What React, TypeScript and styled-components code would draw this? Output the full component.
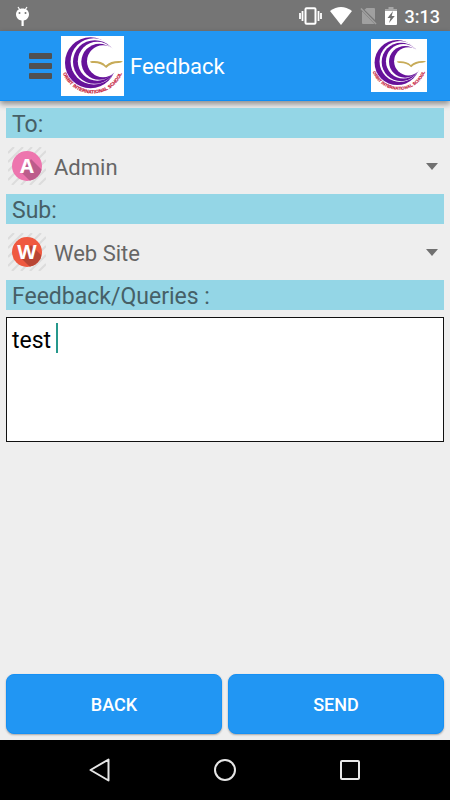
import React, { useId, useState } from "react";
import styled, { createGlobalStyle } from "styled-components";

const GlobalStyle = createGlobalStyle`
  * { box-sizing: border-box; }
  body { margin: 0; background: #eeeeee; font-family: Roboto, "Noto Sans", sans-serif; }
  button, select, textarea { font-family: inherit; }
`;

const Screen = styled.div`
  display: flex;
  flex-direction: column;
  min-height: 100vh;
`;

const StatusBar = styled.div`
  display: flex;
  align-items: center;
  justify-content: space-between;
  height: 31px;
  padding: 0 10px 0 14px;
  background: #757575;
  color: #ffffff;
`;

const StatusGroup = styled.div`
  display: flex;
  align-items: center;
  gap: 8px;
`;

const Clock = styled.time`
  font-size: 18px;
  font-weight: 500;
  line-height: 24px;
  padding-top: 2px;
`;

const AppBar = styled.header`
  display: flex;
  align-items: center;
  height: 70px;
  padding: 0 23px 0 28px;
  background: #2196f3;
  border-bottom: 1px solid #0c8cf5;
  box-shadow: 0 3px 6px rgba(0, 0, 0, 0.42);
`;

const MenuButton = styled.button`
  display: flex;
  padding: 0;
  border: 0;
  background: none;
  margin-right: 8px;
`;

const Title = styled.h1`
  flex: 1;
  margin: 0 0 0 6px;
  font-size: 22px;
  font-weight: 400;
  line-height: 30px;
  color: #ffffff;
  padding-top: 3px;
`;

const Form = styled.form`
  display: flex;
  flex-direction: column;
  flex: 1;
  padding: 7px 6px 6px;
`;

const FieldLabel = styled.label`
  display: block;
  padding: 3px 6px 0;
  background: #94d6e6;
  color: #466067;
  font-size: 23px;
  line-height: 27px;
`;

const PickerRow = styled.div`
  display: flex;
  align-items: center;
  height: 56px;
  padding: 0 6px 0 2px;
`;

const Picker = styled.select`
  flex: 1;
  min-width: 0;
  height: 40px;
  margin-left: 8px;
  padding: 4px 0 0;
  appearance: none;
  border: 0;
  background: none;
  color: #666666;
  font-size: 22px;
  line-height: 30px;
`;

const MessageArea = styled.div`
  position: relative;
  display: flex;
  margin-top: 7px;
`;

const MessageBox = styled.textarea`
  flex: 1;
  height: 125px;
  padding: 8px 5px;
  border: 1px solid #111111;
  border-radius: 0;
  outline: none;
  resize: none;
  background: #ffffff;
  color: #000000;
  caret-color: #26988c;
  font-size: 23px;
  line-height: 30px;
`;

const Caret = styled.span`
  position: absolute;
  top: 6px;
  left: 50px;
  width: 2px;
  height: 30px;
  background: #26988c;
  pointer-events: none;
`;

const Actions = styled.div`
  display: flex;
  gap: 6px;
  margin-top: auto;
`;

const ActionButton = styled.button`
  flex: 1;
  height: 60px;
  padding: 0;
  border: 1px solid #1590f5;
  border-radius: 8px;
  background: #2196f3;
  box-shadow: 0 1px 2px rgba(0, 0, 0, 0.3);
  color: #ffffff;
  font-size: 18px;
  font-weight: 500;
`;

const NavBar = styled.nav`
  display: flex;
  align-items: center;
  justify-content: center;
  gap: 101px;
  height: 60px;
  background: #000000;
`;

const NavButton = styled.button`
  display: flex;
  padding: 0;
  border: 0;
  background: none;
`;

function SchoolLogo({ width, height }: { width: number; height: number }) {
  const id = useId();
  return (
    <svg width={width} height={height} viewBox="0 0 63 60" preserveAspectRatio="none" role="img" aria-label="Orbit International School">
      <rect width="63" height="60" fill="#fff" />
      <circle cx="29.500" cy="26.700" r="25.500" fill="#66129a" />
      <circle cx="32.800" cy="25.400" r="23.200" fill="#fff" />
      <circle cx="33.800" cy="26" r="21.800" fill="#66129a" />
      <circle cx="36.300" cy="25.200" r="19.500" fill="#fff" />
      <circle cx="38.300" cy="25.800" r="18" fill="#66129a" />
      <circle cx="42" cy="25.200" r="16" fill="#fff" />
      <path d="M29 25.500c6-1 12-.2 15.800 4 4-4 10-5 17-4.200-1 1.200-2.200 1.600-4 1.600-5 .1-9.200 1.700-12.600 5-3.600-3.600-8.200-5-13-4.800-1.800 0-2.800-.6-3.200-1.600Z" fill="#c7ab58" />
      <path id={id} d="M2 37A31.500 31.500 0 0 0 61 37" fill="none" />
      <text fontFamily="'Liberation Sans', sans-serif" fontSize="4.700" fontWeight="700" fill="#c4163a" stroke="#c4163a" strokeWidth="0.200">
        <textPath href={`#${id}`} startOffset="50%" textAnchor="middle">ORBIT INTERNATIONAL SCHOOL</textPath>
      </text>
    </svg>
  );
}

function LetterBadge({ letter, color, shade }: { letter: string; color: string; shade: string }) {
  const id = useId();
  return (
    <svg width="38" height="38" viewBox="0 0 38 38" aria-hidden="true">
      <defs>
        <clipPath id={id}><circle cx="19" cy="19" r="15" /></clipPath>
      </defs>
      <path d="M0 6 6 0M0 15 15 0M0 24 24 0M0 33 33 0M4 38 38 4M13 38 38 13M22 38 38 22M31 38 38 31" stroke="#dcdcdc" strokeWidth="2" />
      <circle cx="19" cy="19" r="15" fill={color} />
      <path d="M23 12 40 29 30 42 13 25Z" fill={shade} clipPath={`url(#${id})`} />
      <text x="19" y="26" textAnchor="middle" fontFamily="'Noto Sans', sans-serif" fontSize="20" fontWeight="700" fill="#fff">{letter}</text>
    </svg>
  );
}

function DropArrow() {
  return (
    <svg width="12" height="7" viewBox="0 0 12 7" aria-hidden="true">
      <path d="M0 0h12L6 7Z" fill="#707070" />
    </svg>
  );
}

function DebugIcon() {
  return (
    <svg width="17" height="20" viewBox="0 0 17 20" aria-hidden="true">
      <path d="M4 1 6 4M13 1 11 4" stroke="#fff" strokeWidth="1.200" />
      <path d="M2 8.500C2 4.500 5 2.500 8.500 2.500S15 4.500 15 8.500c0 3-3 6-5.300 6V20H7.500v-5.500C5 14.500 2 11.500 2 8.500Z" fill="#fff" />
      <circle cx="5.500" cy="7" r="1" fill="#757575" />
      <circle cx="11.500" cy="7" r="1" fill="#757575" />
    </svg>
  );
}

function VibrateIcon() {
  return (
    <svg width="23" height="18" viewBox="0 0 23 18" aria-hidden="true">
      <rect x="6.500" y="1.200" width="10" height="15.600" rx="1" fill="none" stroke="#fff" strokeWidth="2" />
      <path d="M3.500 4v10M19.500 4v10M1 6v6M22 6v6" stroke="#fff" strokeWidth="1.800" />
    </svg>
  );
}

function WifiIcon() {
  return (
    <svg width="22" height="18" viewBox="0 0 22 18" aria-hidden="true">
      <path d="M0 4Q11-4 22 4L11 18Z" fill="#fff" />
    </svg>
  );
}

function NoSimIcon() {
  return (
    <svg width="17" height="18" viewBox="0 0 17 18" aria-hidden="true">
      <path d="M6.500 1H14a1 1 0 0 1 1 1v11L4.500 2.800ZM2.500 4.500 14.500 17H3a1 1 0 0 1-1-1V5Z" fill="#a0a0a0" />
      <path d="M1 1.500 16 17" stroke="#a0a0a0" strokeWidth="1.500" />
    </svg>
  );
}

function BatteryIcon() {
  return (
    <svg width="12" height="18" viewBox="0 0 12 18" aria-hidden="true">
      <path d="M3.500 0h5v2H12v3H0V2h3.500Z" fill="#a7a7a7" />
      <path d="M0 4h12v13a1 1 0 0 1-1 1H1a1 1 0 0 1-1-1Z" fill="#fff" />
      <path d="M8 4 2.500 11H5.500L4 16 9.800 9H6.700Z" fill="#707070" />
    </svg>
  );
}

const recipients = [
  { name: "Admin", letter: "A", color: "#ed75ae", shade: "#bc5c8b" },
  { name: "Teacher", letter: "T", color: "#4aa7d8", shade: "#3982aa" },
];

const subjects = [
  { name: "Web Site", letter: "W", color: "#ef5940", shade: "#b84534" },
  { name: "Mobile App", letter: "M", color: "#5eb878", shade: "#468d5b" },
];

function PickerField({ id, label, options }: { id: string; label: string; options: typeof recipients }) {
  const [index, setIndex] = useState(0);
  const { letter, color, shade } = options[index];
  return (
    <>
      <FieldLabel htmlFor={id}>{label}</FieldLabel>
      <PickerRow>
        <LetterBadge letter={letter} color={color} shade={shade} />
        <Picker id={id} value={index} onChange={(e) => setIndex(Number(e.target.value))}>
          {options.map((option, i) => (
            <option key={option.name} value={i}>{option.name}</option>
          ))}
        </Picker>
        <DropArrow />
      </PickerRow>
    </>
  );
}

export default function App() {
  const [message, setMessage] = useState("test ");
  const [touched, setTouched] = useState(false);
  return (
    <Screen>
      <GlobalStyle />
      <StatusBar>
        <DebugIcon />
        <StatusGroup>
          <VibrateIcon />
          <WifiIcon />
          <NoSimIcon />
          <StatusGroup>
            <BatteryIcon />
            <Clock>3:13</Clock>
          </StatusGroup>
        </StatusGroup>
      </StatusBar>
      <AppBar>
        <MenuButton type="button" aria-label="Menu">
          <svg width="25" height="28" viewBox="0 0 25 28" aria-hidden="true">
            <path d="M2 1h21a1 1 0 0 1 1 1v4a1 1 0 0 1-1 1H2a1 1 0 0 1-1-1V2a1 1 0 0 1 1-1ZM2 11h21a1 1 0 0 1 1 1v4a1 1 0 0 1-1 1H2a1 1 0 0 1-1-1v-4a1 1 0 0 1 1-1ZM2 21h21a1 1 0 0 1 1 1v4a1 1 0 0 1-1 1H2a1 1 0 0 1-1-1v-4a1 1 0 0 1 1-1Z" fill="#505050" />
          </svg>
        </MenuButton>
        <SchoolLogo width={63} height={60} />
        <Title>Feedback</Title>
        <SchoolLogo width={56} height={53} />
      </AppBar>
      <Form onSubmit={(e) => e.preventDefault()}>
        <PickerField id="to" label="To:" options={recipients} />
        <PickerField id="subject" label="Sub:" options={subjects} />
        <FieldLabel htmlFor="message">Feedback/Queries :</FieldLabel>
        <MessageArea>
          <MessageBox
            id="message"
            value={message}
            spellCheck={false}
            onFocus={() => setTouched(true)}
            onChange={(e) => setMessage(e.target.value)}
          />
          {!touched && <Caret />}
        </MessageArea>
        <Actions>
          <ActionButton type="button">BACK</ActionButton>
          <ActionButton type="submit">SEND</ActionButton>
        </Actions>
      </Form>
      <NavBar aria-label="System navigation">
        <NavButton type="button" aria-label="Back">
          <svg width="24" height="26" viewBox="0 0 24 26" aria-hidden="true">
            <path d="M20.500 2.500v21L2.500 13Z" fill="none" stroke="#e6e6e6" strokeWidth="2" strokeLinejoin="round" />
          </svg>
        </NavButton>
        <NavButton type="button" aria-label="Home">
          <svg width="24" height="24" viewBox="0 0 24 24" aria-hidden="true">
            <circle cx="12" cy="12" r="10" fill="none" stroke="#e6e6e6" strokeWidth="2" />
          </svg>
        </NavButton>
        <NavButton type="button" aria-label="Recent apps">
          <svg width="24" height="24" viewBox="0 0 24 24" aria-hidden="true">
            <rect x="3" y="3" width="18" height="18" rx="1" fill="none" stroke="#e6e6e6" strokeWidth="2" />
          </svg>
        </NavButton>
      </NavBar>
    </Screen>
  );
}
